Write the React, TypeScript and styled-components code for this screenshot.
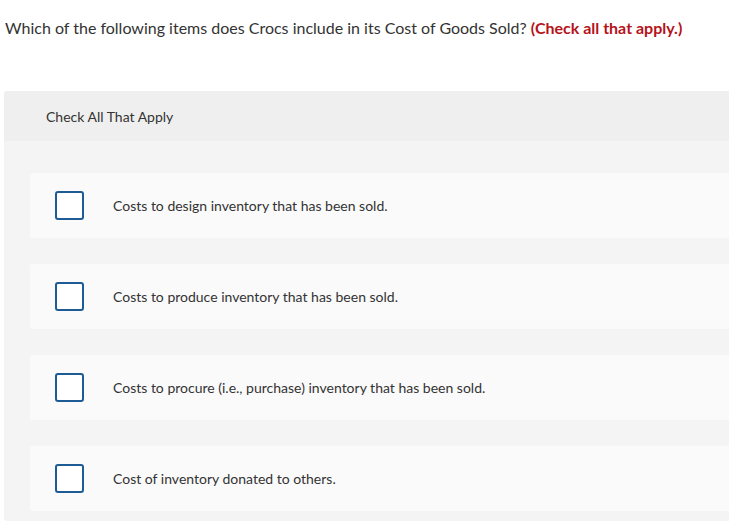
import React from "react";
import styled, { createGlobalStyle } from "styled-components";

const GlobalStyle = createGlobalStyle`
  html, body {
    margin: 0;
    padding: 0;
    background: #fff;
    overflow: hidden;
  }
  body {
    font-family: Lato, "Open Sans", Arial, sans-serif;
    color: #333;
  }
`;

const Page = styled.div`
  width: 729px;
  height: 522px;
  overflow: hidden;
`;

const Question = styled.p`
  margin: 0;
  padding: 18px 0 0 5px;
  font-size: 16px;
  line-height: 20px;
  color: #333;
  white-space: nowrap;
`;

const Emphasis = styled.strong`
  color: #b5121b;
  font-weight: 700;
`;

const Panel = styled.section`
  margin: 53px 0 0 4px;
  width: 760px;
  background: #f4f4f4;
  border-radius: 3px;
`;

const PanelHeader = styled.div`
  height: 50px;
  display: flex;
  align-items: center;
  padding-left: 42px;
  background: #efefef;
  font-size: 14px;
  color: #333;
  border-radius: 3px 3px 0 0;
`;

const OptionList = styled.div`
  display: flex;
  flex-direction: column;
  gap: 26px;
  padding: 32px 0 10px 26px;
`;

const Option = styled.label`
  height: 65px;
  display: flex;
  align-items: center;
  padding-left: 25px;
  background: #fafafa;
  border-radius: 3px;
  cursor: pointer;
`;

const Box = styled.span`
  width: 29px;
  height: 29px;
  box-sizing: border-box;
  border: 2px solid #1d5b94;
  border-radius: 3px;
  background: #fff;
  flex-shrink: 0;
`;

const OptionText = styled.span`
  margin-left: 29px;
  font-size: 14px;
  color: #333;
`;

const options = [
  "Costs to design inventory that has been sold.",
  "Costs to produce inventory that has been sold.",
  "Costs to procure (i.e., purchase) inventory that has been sold.",
  "Cost of inventory donated to others.",
];

export default function App() {
  return (
    <Page>
      <GlobalStyle />
      <Question>
        Which of the following items does Crocs include in its Cost of Goods Sold?{" "}
        <Emphasis>(Check all that apply.)</Emphasis>
      </Question>
      <Panel>
        <PanelHeader>Check All That Apply</PanelHeader>
        <OptionList>
          {options.map((text) => (
            <Option key={text}>
              <Box />
              <OptionText>{text}</OptionText>
            </Option>
          ))}
        </OptionList>
      </Panel>
    </Page>
  );
}
